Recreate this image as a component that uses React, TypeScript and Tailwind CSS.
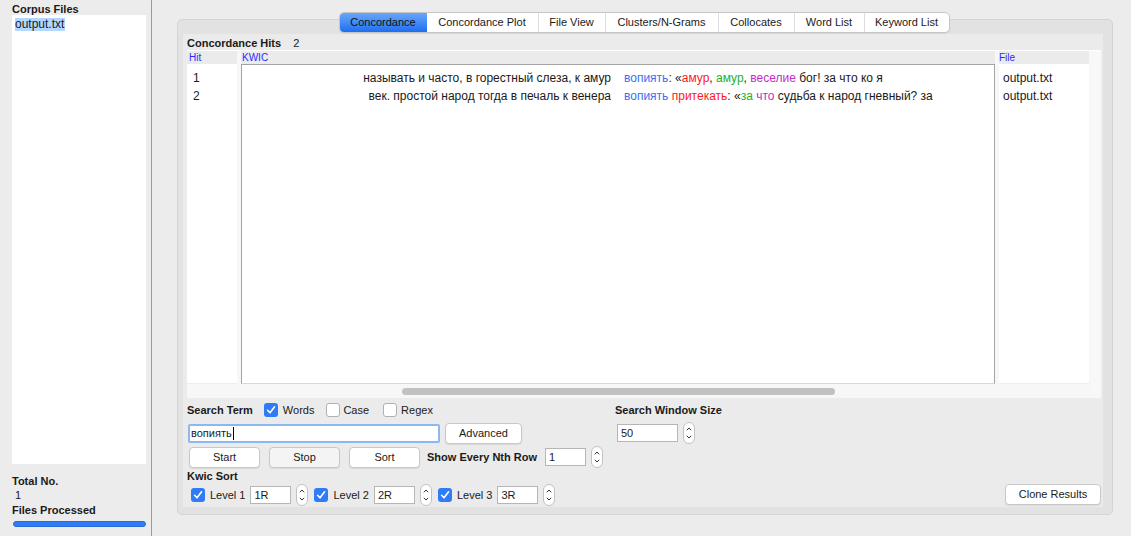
import React from "react";

const Check = ({ checked }: { checked: boolean }) =>
  checked ? (
    <span className="block w-[14px] h-[14px] rounded-[3px] bg-[#2f7cf6] flex items-center justify-center shrink-0">
      <svg width="10" height="10" viewBox="0 0 10 10">
        <path d="M1.6 5.3 L4 7.8 L8.6 1.8" stroke="white" strokeWidth="1.6" fill="none" strokeLinecap="round" strokeLinejoin="round" />
      </svg>
    </span>
  ) : (
    <span className="block w-[14px] h-[14px] rounded-[3px] bg-white border border-[#b0b0b0] shrink-0" />
  );

const Spinner = () => (
  <span className="w-[12px] h-[22px] rounded-full bg-white border border-[#c2c2c2] flex flex-col items-center justify-center gap-[4px] shrink-0">
    <svg width="6" height="4" viewBox="0 0 6 4">
      <path d="M0.8 3.3 L3 1 L5.2 3.3" stroke="#333" strokeWidth="1" fill="none" />
    </svg>
    <svg width="6" height="4" viewBox="0 0 6 4">
      <path d="M0.8 0.8 L3 3 L5.2 0.8" stroke="#333" strokeWidth="1" fill="none" />
    </svg>
  </span>
);

const Btn = ({ children, w, gray }: { children: React.ReactNode; w: string; gray?: boolean }) => (
  <div
    className={`${w} h-[21px] ${gray ? "bg-[#f4f4f4]" : "bg-white"} border border-[#c8c8c8] rounded-[4px] shadow-[0_1px_1px_rgba(0,0,0,0.08)] text-[11px] flex items-center justify-center shrink-0`}
  >
    {children}
  </div>
);

const Field = ({ value, w }: { value: string; w: string }) => (
  <div className={`${w} h-[18px] bg-white border border-[#b6b6b6] text-[11px] px-[3px] flex items-center shrink-0`}>{value}</div>
);

const B = "text-[#3f6ff0]";
const R = "text-[#ff1a1a]";
const G = "text-[#1fb21f]";
const M = "text-[#c12ec8]";

export default function App() {
  const tabs = ["Concordance", "Concordance Plot", "File View", "Clusters/N-Grams", "Collocates", "Word List", "Keyword List"];
  const tabW = ["w-[87px]", "w-[111px]", "w-[67px]", "w-[113px]", "w-[76px]", "w-[70px]", "w-[85px]"];
  return (
    <div
      className="w-[1131px] h-[536px] bg-[#ececec] flex text-[#1a1a1a] overflow-hidden"
      style={{ fontFamily: '"Liberation Sans", Arial, sans-serif' }}
    >
      {/* Left panel */}
      <div className="w-[152px] h-full border-r border-[#9a9a9a] flex flex-col pl-[12px] pr-[5px] shrink-0">
        <div className="h-[15px] text-[11px] font-bold leading-[13px] pt-[3px]">Corpus Files</div>
        <div className="h-[449px] bg-white pt-[3px] pl-[3px] text-[12px] leading-[13px]">
          <span className="bg-[#b3d7ff] inline-block pr-[1px]">output.txt</span>
        </div>
        <div className="mt-[11px] text-[11px] font-bold leading-[12px]">Total No.</div>
        <div className="mt-[2px] pl-[3px] text-[11px] leading-[12px]">1</div>
        <div className="mt-[3px] text-[11px] font-bold leading-[12px]">Files Processed</div>
        <div className="mt-[5px] ml-[1px] w-[133px] h-[6px] rounded-full bg-[#2f7cf6] border border-[#2a6ad8]" />
      </div>

      {/* Right area */}
      <div className="flex-1 pl-[25px] pr-[18px] pt-[19px] pb-[21px]">
        <div className="h-full border border-[#d4d4d4] bg-[#e2e2e2] rounded-[5px] flex flex-col">
          {/* Tabs */}
          <div className="-mt-[8px] h-[21px] flex justify-center">
            <div className="-ml-[2px] flex h-[21px] border border-[#c6c6c6] rounded-[5px] bg-white overflow-hidden shadow-[0_1px_1px_rgba(0,0,0,0.06)]">
              {tabs.map((t, i) => (
                <div
                  key={t}
                  className={`${tabW[i]} h-full text-[11px] flex items-center justify-center ${
                    i === 0
                      ? "bg-gradient-to-b from-[#67a6fa] to-[#1d6ef1] text-[#111]"
                      : "border-l border-[#dedede]"
                  } ${i === 1 ? "border-l-0" : ""}`}
                >
                  {t}
                </div>
              ))}
            </div>
          </div>

          {/* Inner content */}
          <div className="mt-[1px] ml-[5px] mr-[9px] mb-[7px] flex-1 bg-[#ebebeb] flex flex-col pl-[4px] pr-[2px]">
            <div className="h-[16px] pt-[3px] text-[11px] font-bold leading-[12px] flex">
              <span>Concordance Hits</span>
              <span className="ml-[12px] font-normal">2</span>
            </div>

            {/* Table */}
            <div className="h-[348px] bg-[#f7f7f7] flex border-t border-white">
              {/* Hit */}
              <div className="w-[50px] flex flex-col">
                <div className="h-[13px] bg-[#ebebeb] text-[10px] leading-[13px] text-[#2a2aff] pl-[2px]">Hit</div>
                <div className="h-[319px] bg-white pt-[5px] pl-[6px] text-[12px] leading-[18px]">
                  <div>1</div>
                  <div>2</div>
                </div>
                <div className="flex-1 border-t border-[#ededed]" />
              </div>
              {/* KWIC */}
              <div className="ml-[4px] w-[754px] flex flex-col">
                <div className="h-[13px] bg-[#ebebeb] text-[10px] leading-[13px] text-[#2a2aff] pl-[1px]">KWIC</div>
                <div className="h-[320px] bg-white border border-[#a3a3a3] border-b-[#d8d8d8] pt-[4px] text-[12px] leading-[18px] whitespace-nowrap">
                  <div className="flex">
                    <div className="w-[369px] text-right">называть и часто, в горестный слеза, к амур</div>
                    <div className="ml-[13px]">
                      <span className={B}>вопиять</span>: «<span className={R}>амур</span>, <span className={G}>амур</span>,{" "}
                      <span className={M}>веселие</span> бог! за что ко я
                    </div>
                  </div>
                  <div className="flex">
                    <div className="w-[369px] text-right">век. простой народ тогда в печаль к венера</div>
                    <div className="ml-[13px]">
                      <span className={B}>вопиять</span> <span className={R}>притекать</span>: «<span className={G}>за</span>{" "}
                      <span className={M}>что</span> судьба к народ гневный? за
                    </div>
                  </div>
                </div>
                <div className="flex-1 flex items-center">
                  <div className="ml-[161px] w-[433px] h-[7px] rounded-full bg-[#c1c1c1]" />
                </div>
              </div>
              {/* File */}
              <div className="ml-[4px] w-[90px] flex flex-col">
                <div className="h-[13px] bg-[#ebebeb] text-[10px] leading-[13px] text-[#2a2aff] pl-[0px]">File</div>
                <div className="h-[319px] bg-white pt-[5px] pl-[4px] text-[12px] leading-[18px]">
                  <div>output.txt</div>
                  <div>output.txt</div>
                </div>
                <div className="flex-1 border-t border-[#ededed]" />
              </div>
              <div className="flex-1 ml-[2px] bg-[#f8f8f8]" />
            </div>

            {/* Controls */}
            <div className="flex-1 flex">
              <div className="w-[428px] flex flex-col">
                <div className="mt-[5px] h-[14px] flex items-center text-[11px]">
                  <span className="font-bold">Search Term</span>
                  <span className="ml-[11px]"><Check checked /></span>
                  <span className="ml-[5px]">Words</span>
                  <span className="ml-[12px]"><Check checked={false} /></span>
                  <span className="ml-[3px]">Case</span>
                  <span className="ml-[14px]"><Check checked={false} /></span>
                  <span className="ml-[4px]">Regex</span>
                </div>
                <div className="mt-[5px] h-[22px] flex items-center">
                  <div className="ml-[1px] w-[252px] h-[19px] bg-white border-[2px] border-[#8db7f3] rounded-[2px] text-[11px] pl-[1px] flex items-center">
                    вопиять<span className="w-[1px] h-[13px] bg-black ml-[1px]" />
                  </div>
                  <span className="ml-[5px]"><Btn w="w-[77px]">Advanced</Btn></span>
                </div>
                <div className="mt-[2px] h-[22px] flex items-center">
                  <span className="ml-[2px]"><Btn w="w-[71px]">Start</Btn></span>
                  <span className="ml-[9px]"><Btn w="w-[71px]" gray>Stop</Btn></span>
                  <span className="ml-[9px]"><Btn w="w-[71px]">Sort</Btn></span>
                  <span className="ml-[7px] text-[11px] font-bold">Show Every Nth Row</span>
                  <span className="ml-[8px]"><Field value="1" w="w-[41px]" /></span>
                  <span className="ml-[5px]"><Spinner /></span>
                </div>
                <div className="mt-[2px] h-[13px] text-[11px] font-bold leading-[13px]">Kwic Sort</div>
                <div className="mt-[1px] h-[22px] flex items-center text-[11px]">
                  {["1R", "2R", "3R"].map((v, i) => (
                    <div key={v} className={`flex items-center ${i === 0 ? "ml-[4px]" : "ml-[6px]"}`}>
                      <Check checked />
                      <span className="ml-[5px]">Level {i + 1}</span>
                      <span className="ml-[5px]"><Field value={v} w="w-[41px]" /></span>
                      <span className="ml-[5px]"><Spinner /></span>
                    </div>
                  ))}
                </div>
              </div>
              <div className="flex-1 flex flex-col">
                <div className="mt-[5px] h-[14px] flex items-center text-[11px] font-bold">Search Window Size</div>
                <div className="mt-[5px] h-[22px] flex items-center">
                  <span className="ml-[2px]"><Field value="50" w="w-[61px]" /></span>
                  <span className="ml-[5px]"><Spinner /></span>
                </div>
                <div className="flex-1" />
                <div className="mb-[2px] flex justify-end">
                  <Btn w="w-[96px]">Clone Results</Btn>
                </div>
              </div>
            </div>
          </div>
        </div>
      </div>
    </div>
  );
}
